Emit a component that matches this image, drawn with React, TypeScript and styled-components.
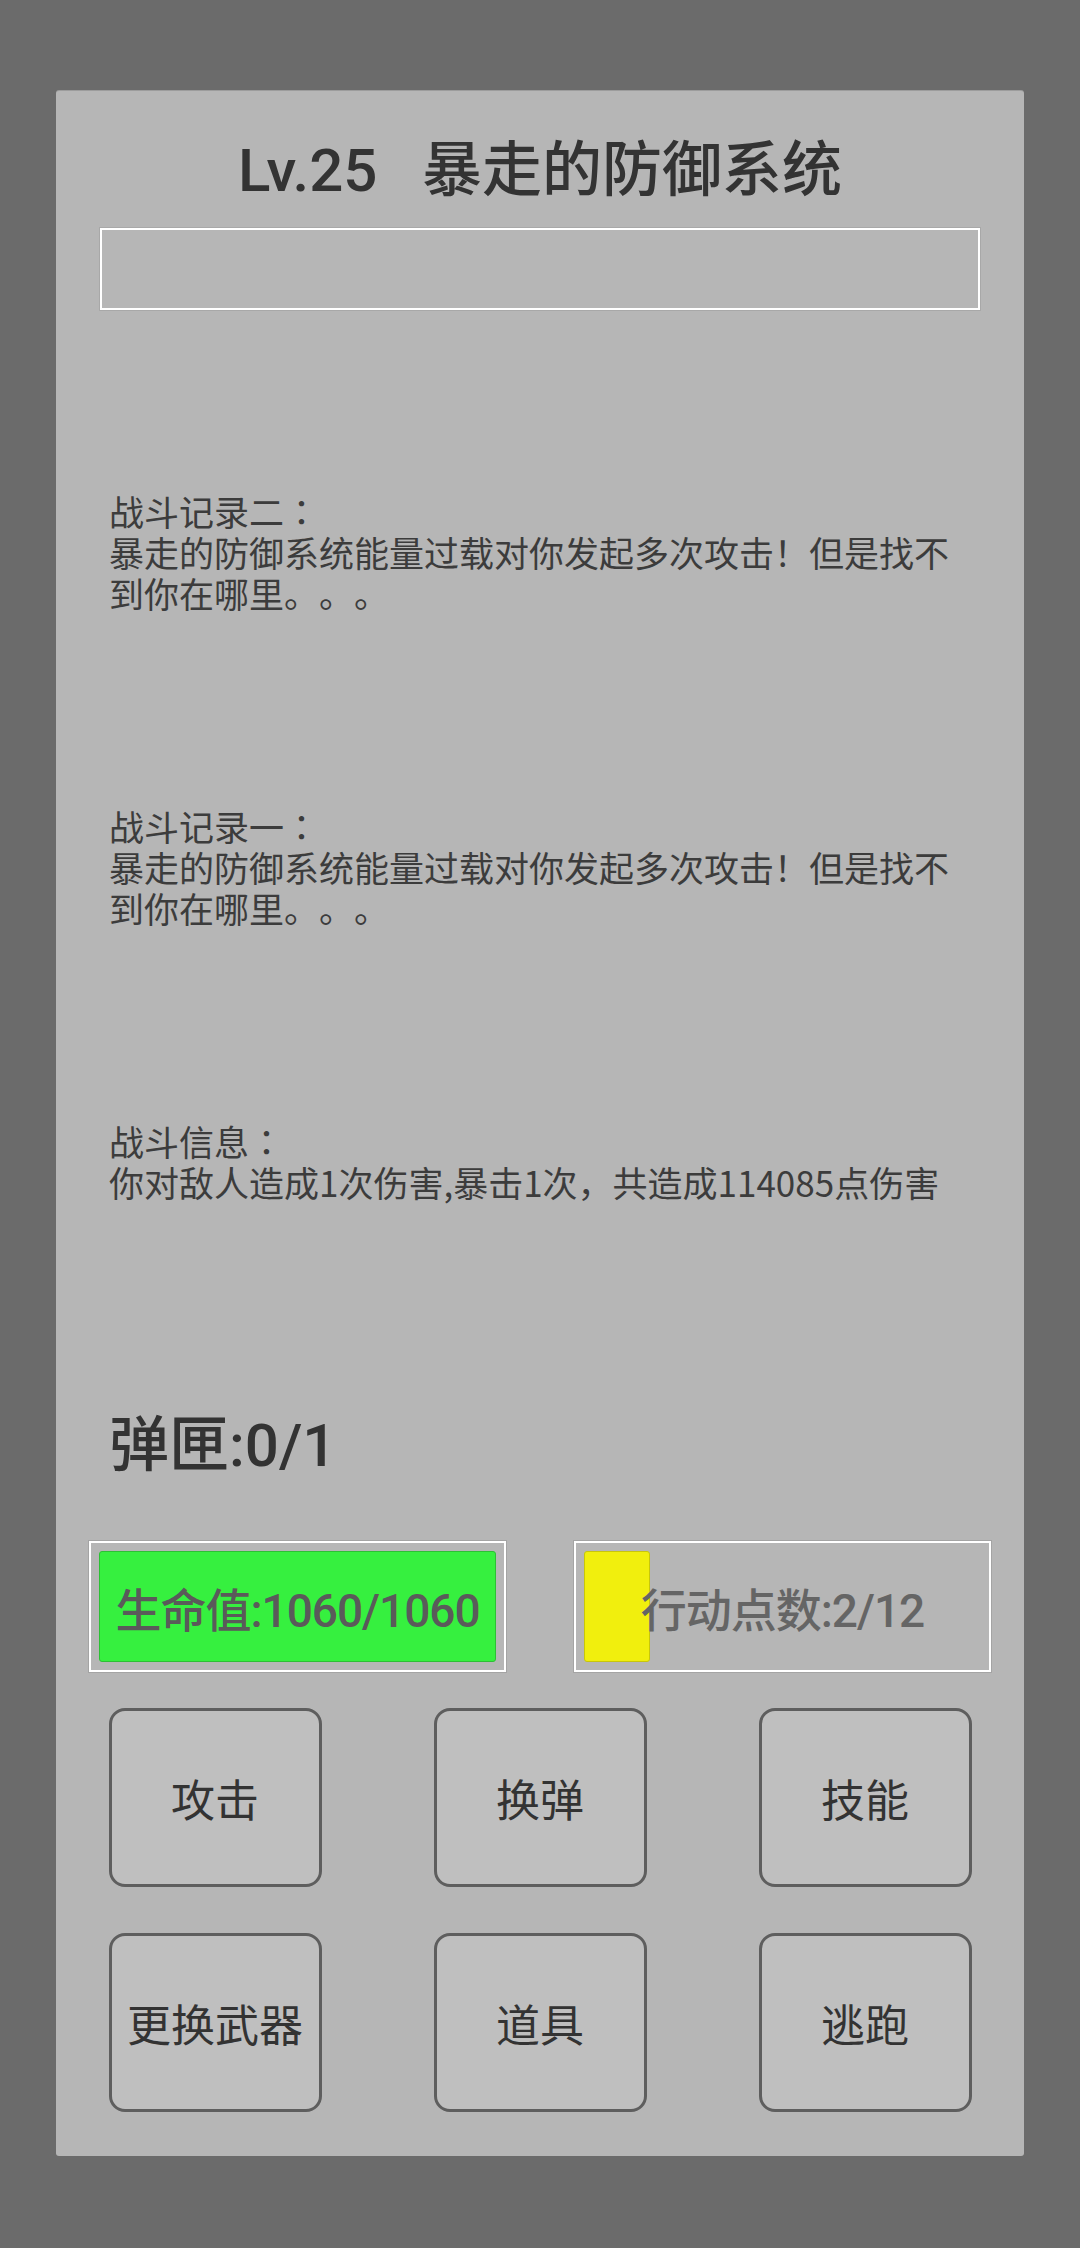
import React from "react";
import styled, { createGlobalStyle } from "styled-components";

const GlobalStyle = createGlobalStyle`
  html, body {
    margin: 0;
    padding: 0;
    background: #6b6b6b;
  }
  body {
    font-family: "Roboto", "Noto Sans CJK SC", sans-serif;
    text-spacing-trim: space-all;
  }
  * { box-sizing: border-box; }
`;

const Screen = styled.div`
  width: 1080px;
  height: 2248px;
  background: #6b6b6b;
  padding: 91px 56px 0 56px;
`;

const Panel = styled.div`
  width: 968px;
  height: 2065px;
  background: #b6b6b6;
  border-radius: 3px;
  box-shadow: 0 -1px 0 #9c9c9c;
  display: flex;
  flex-direction: column;
  padding: 50px 44px 44px 44px;
`;

const Title = styled.h1`
  margin: 0;
  font-family: "Roboto", "Noto Sans CJK SC", sans-serif;
  font-weight: 500;
  font-size: 60px;
  line-height: 60px;
  color: #333333;
  text-align: center;
  white-space: pre;
`;

const NameInput = styled.div`
  margin-top: 27px;
  height: 84px;
  border: 2px solid #ffffff;
  box-shadow: 0 0 0 1px #a8a8a8;
  background: #b6b6b6;
`;

const LogList = styled.div`
  margin-top: 180px;
  padding-left: 9px;
  width: 866px;
  display: flex;
  flex-direction: column;
  gap: 192px;
`;

const LogBlock = styled.div`
  font-family: "Noto Sans CJK SC", sans-serif;
  font-size: 35px;
  line-height: 41px;
  color: #3c3c3c;
  text-spacing-trim: space-all;
  font-feature-settings: normal;
`;

const LogLine = styled.div``;

const Colon = styled.span`
  font-family: "Noto Sans CJK TC", sans-serif;
`;

const Magazine = styled.div`
  margin-top: 215px;
  padding-left: 9px;
  font-family: "Roboto", "Noto Sans CJK SC", sans-serif;
  font-weight: 500;
  font-size: 60px;
  line-height: 58px;
  color: #333333;
`;

const BarRow = styled.div`
  margin-top: 66px;
  display: flex;
  justify-content: space-between;
  margin-left: -11px;
  margin-right: -11px;
`;

const BarFrame = styled.div`
  position: relative;
  width: 417px;
  height: 131px;
  border: 2px solid #ffffff;
  box-shadow: 0 0 0 1px #a4a4a4;
  padding: 8px;
  display: flex;
`;

const BarFill = styled.div<{ $color: string; $edge: string }>`
  height: 100%;
  background: ${(p) => p.$color};
  border: 1px solid ${(p) => p.$edge};
  border-radius: 3px;
`;

const BarLabel = styled.div<{ $color: string }>`
  position: absolute;
  inset: 0;
  display: flex;
  align-items: center;
  justify-content: center;
  font-family: "Roboto", "Noto Sans CJK SC", sans-serif;
  font-weight: 500;
  font-size: 46px;
  color: ${(p) => p.$color};
  letter-spacing: -1px;
`;

const ButtonGrid = styled.div`
  margin-top: 36px;
  display: grid;
  grid-template-columns: repeat(3, 213px);
  grid-auto-rows: 179px;
  column-gap: 112px;
  row-gap: 46px;
  justify-content: center;
`;

const ActionButton = styled.button`
  margin: 0;
  padding: 0;
  background: #bfbfbf;
  border: 3px solid #5e5e5e;
  border-radius: 16px;
  font-family: "Noto Sans CJK SC", sans-serif;
  font-size: 44px;
  color: #333333;
  display: flex;
  align-items: center;
  justify-content: center;
  cursor: pointer;
`;

const logs = [
  {
    title: "战斗记录二",
    body: "暴走的防御系统能量过载对你发起多次攻击！但是找不到你在哪里。。。",
  },
  {
    title: "战斗记录一",
    body: "暴走的防御系统能量过载对你发起多次攻击！但是找不到你在哪里。。。",
  },
  {
    title: "战斗信息",
    body: "你对敌人造成1次伤害,暴击1次，共造成114085点伤害",
  },
];

const hp = { cur: 1060, max: 1060 };
const ap = { cur: 2, max: 12 };
const actions = ["攻击", "换弹", "技能", "更换武器", "道具", "逃跑"];

export default function App() {
  return (
    <>
      <GlobalStyle />
      <Screen>
        <Panel>
          <Title>{"Lv.25   暴走的防御系统"}</Title>
          <NameInput />
          <LogList>
            {logs.map((l, i) => (
              <LogBlock key={i}>
                <LogLine>
                  {l.title}
                  <Colon>：</Colon>
                </LogLine>
                <LogLine>{l.body}</LogLine>
              </LogBlock>
            ))}
          </LogList>
          <Magazine>弹匣:0/1</Magazine>
          <BarRow>
            <BarFrame>
              <BarFill
                $color="#36f03f"
                $edge="#2cc034"
                style={{ width: `${(hp.cur / hp.max) * 100}%` }}
              />
              <BarLabel $color="#5a5a5a">
                生命值:{hp.cur}/{hp.max}
              </BarLabel>
            </BarFrame>
            <BarFrame>
              <BarFill
                $color="#f1ef0d"
                $edge="#c8c60a"
                style={{ width: `${(ap.cur / ap.max) * 100}%` }}
              />
              <BarLabel $color="#656565">
                行动点数:{ap.cur}/{ap.max}
              </BarLabel>
            </BarFrame>
          </BarRow>
          <ButtonGrid>
            {actions.map((a) => (
              <ActionButton key={a}>{a}</ActionButton>
            ))}
          </ButtonGrid>
        </Panel>
      </Screen>
    </>
  );
}
